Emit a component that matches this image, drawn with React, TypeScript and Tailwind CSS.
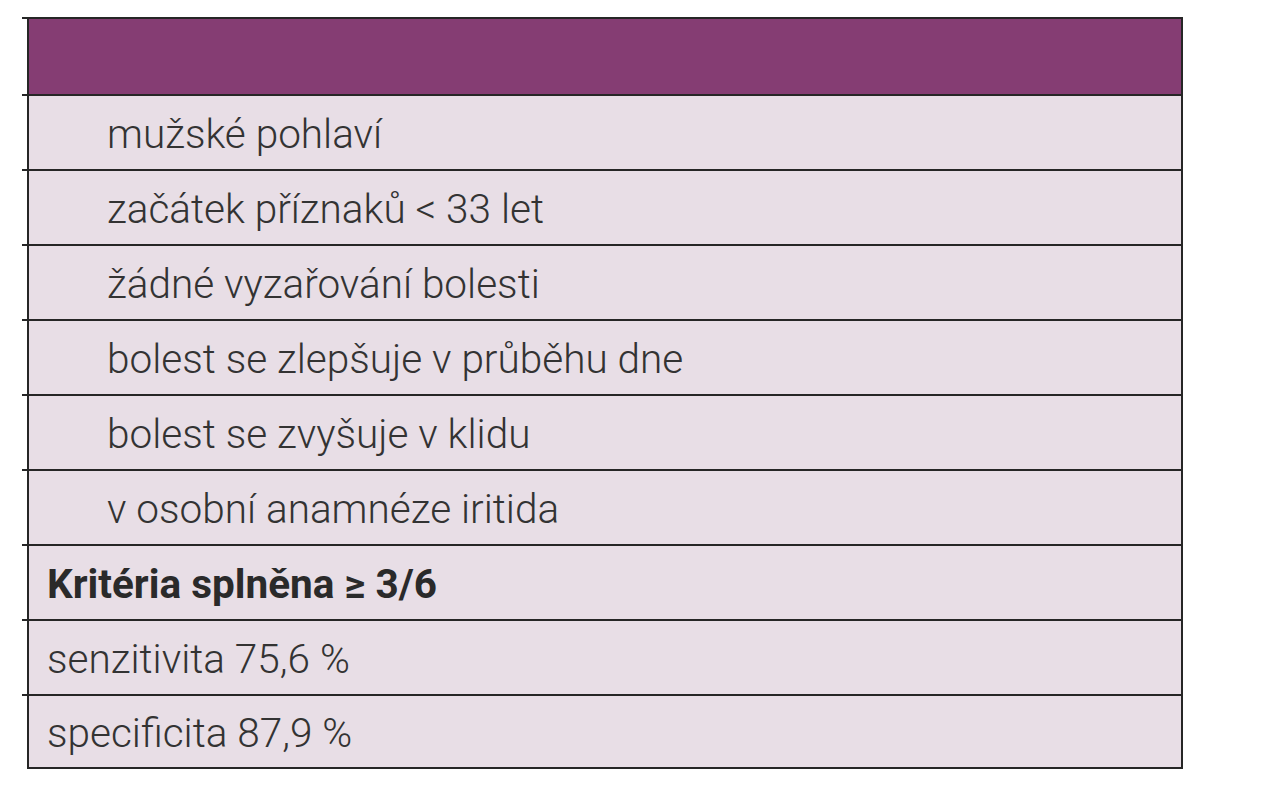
import React from 'react';

const rows = [
  { text: 'mužské pohlaví', indent: true },
  { text: 'začátek příznaků < 33 let', indent: true },
  { text: 'žádné vyzařování bolesti', indent: true },
  { text: 'bolest se zlepšuje v průběhu dne', indent: true },
  { text: 'bolest se zvyšuje v klidu', indent: true },
  { text: 'v osobní anamnéze iritida', indent: true },
  { text: 'Kritéria splněna ≥ 3/6', bold: true },
  { text: 'senzitivita 75,6 %' },
  { text: 'specificita 87,9 %' },
];

function Row({ text, indent, bold, last }: { text: string; indent?: boolean; bold?: boolean; last?: boolean }) {
  return (
    <div className="flex">
      <div className="w-[5px] border-t-2 border-[#262626]"></div>
      <div
        className={
          'flex-1 h-[75px] flex items-center bg-[#e8dee6] border-t-2 border-l-2 border-r-2 border-[#262626] ' +
          (last ? 'border-b-2 ' : '') +
          (indent ? 'pl-[78px]' : 'pl-[18px]')
        }
      >
        <span
          className={
            'text-[40.5px] leading-none pt-[3px] ' +
            (bold ? 'font-bold text-[#2a2a2a]' : 'font-light text-[#333333]')
          }
        >
          {text}
        </span>
      </div>
    </div>
  );
}

export default function App() {
  return (
    <div className="min-h-screen bg-white pt-[17px] pl-[22px]" style={{ fontFamily: 'Roboto, "Open Sans", sans-serif' }}>
      <div className="w-[1161px] flex flex-col">
        <div className="flex">
          <div className="w-[5px] border-t-2 border-[#262626]"></div>
          <div className="flex-1 h-[77px] bg-[#853d73] border-t-2 border-l-2 border-r-2 border-[#262626]"></div>
        </div>
        {rows.map((r, i) => (
          <Row key={i} {...r} last={i === rows.length - 1} />
        ))}
      </div>
    </div>
  );
}
